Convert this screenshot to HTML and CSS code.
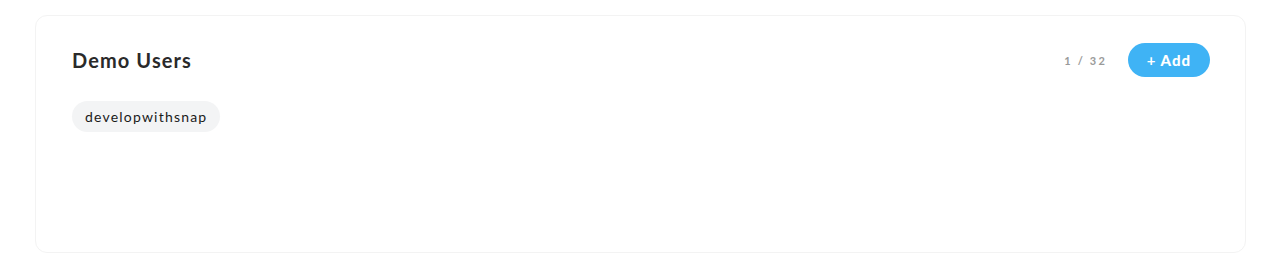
FILE: index.html
```html
<!DOCTYPE html>
<html>
<head>
<meta charset="utf-8">
<link rel="stylesheet" href="styles.css">
</head>
<body>
<div class="page">
  <section class="card">
    <header class="card-head">
      <h2 class="title">Demo Users</h2>
      <div class="actions">
        <span class="count">1 / 32</span>
        <button class="add-btn"><span class="plus">+</span> Add</button>
      </div>
    </header>
    <div class="tags">
      <span class="tag">developwithsnap</span>
    </div>
  </section>
</div>
</body>
</html>
```
FILE: styles.css
```css
html, body {
  margin: 0;
  padding: 0;
  background: #ffffff;
}
body {
  font-family: "Lato", "Noto Sans", sans-serif;
  color: #2b2b2b;
}
.page {
  padding: 15px 34px 0 35px;
}
.card {
  height: 238px;
  box-sizing: border-box;
  border: 1px solid #f3f3f3;
  border-radius: 12px;
  padding: 27px 35px 0 36px;
}
.card-head {
  display: flex;
  align-items: center;
  justify-content: space-between;
  height: 34px;
}
.title {
  margin: 0;
  font-size: 20px;
  font-weight: 700;
  color: #2a2a2a;
  letter-spacing: 1.1px;
}
.actions {
  display: flex;
  align-items: center;
  gap: 21px;
}
.count {
  font-size: 11px;
  font-weight: 700;
  color: #9a9a9a;
  letter-spacing: 2.2px;
}
.add-btn {
  height: 34px;
  width: 82px;
  border: none;
  border-radius: 17px;
  background: #3fb3f5;
  color: #ffffff;
  font-family: "Lato", sans-serif;
  font-size: 15px;
  font-weight: 900;
  letter-spacing: 1px;
  cursor: pointer;
  padding: 0;
}
.plus {
  font-weight: 700;
}
.tags {
  margin-top: 24px;
  display: flex;
}
.tag {
  display: inline-flex;
  align-items: center;
  height: 31px;
  padding: 0 13px;
  border-radius: 16px;
  background: #f3f4f5;
  font-size: 14px;
  font-weight: 400;
  color: #1a1a1a;
  letter-spacing: 1.2px;
}
```
